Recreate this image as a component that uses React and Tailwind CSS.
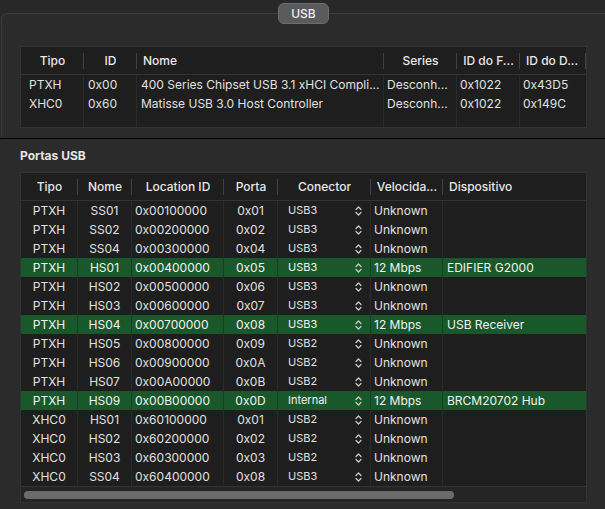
import React from "react";

const rows = [
  ["PTXH", "SS01", "0x00100000", "0x01", "USB3", "Unknown", "", false],
  ["PTXH", "SS02", "0x00200000", "0x02", "USB3", "Unknown", "", false],
  ["PTXH", "SS04", "0x00300000", "0x04", "USB3", "Unknown", "", false],
  ["PTXH", "HS01", "0x00400000", "0x05", "USB3", "12 Mbps", "EDIFIER G2000", true],
  ["PTXH", "HS02", "0x00500000", "0x06", "USB3", "Unknown", "", false],
  ["PTXH", "HS03", "0x00600000", "0x07", "USB3", "Unknown", "", false],
  ["PTXH", "HS04", "0x00700000", "0x08", "USB3", "12 Mbps", "USB Receiver", true],
  ["PTXH", "HS05", "0x00800000", "0x09", "USB2", "Unknown", "", false],
  ["PTXH", "HS06", "0x00900000", "0x0A", "USB2", "Unknown", "", false],
  ["PTXH", "HS07", "0x00A00000", "0x0B", "USB2", "Unknown", "", false],
  ["PTXH", "HS09", "0x00B00000", "0x0D", "Internal", "12 Mbps", "BRCM20702 Hub", true],
  ["XHC0", "HS01", "0x60100000", "0x01", "USB2", "Unknown", "", false],
  ["XHC0", "HS02", "0x60200000", "0x02", "USB2", "Unknown", "", false],
  ["XHC0", "HS03", "0x60300000", "0x03", "USB2", "Unknown", "", false],
  ["XHC0", "SS04", "0x60400000", "0x08", "USB3", "Unknown", "", false],
];

function Chevrons() {
  return (
    <svg width="7" height="10" viewBox="0 0 7 10" fill="none" stroke="#cfcfcf" strokeWidth="1.2" strokeLinecap="round" strokeLinejoin="round">
      <path d="M1 3.5 L3.5 1 L6 3.5" />
      <path d="M1 6.5 L3.5 9 L6 6.5" />
    </svg>
  );
}

function HeadCell({ w, children, align = "center", last }) {
  return (
    <div className={`relative flex h-full items-center shrink-0 ${align === "center" ? "justify-center" : "justify-start pl-[6px]"}`} style={{ width: w }}>
      <span className="truncate">{children}</span>
      {!last && <div className="absolute right-0 top-[6px] h-[16px] w-px bg-[#414141]" />}
    </div>
  );
}

function TopTable() {
  const cols = [63, 53, 247, 73, 63, 66];
  const data = [
    ["PTXH", "0x00", "400 Series Chipset USB 3.1 xHCI Compli...", "Desconh...", "0x1022", "0x43D5"],
    ["XHC0", "0x60", "Matisse USB 3.0 Host Controller", "Desconh...", "0x1022", "0x149C"],
  ];
  const pads = [8, 4, 4, 3, 3, 3];
  return (
    <div className="w-[567px] h-[82px] border border-[#333333] bg-[#1e1e1e] flex flex-col">
      <div className="h-[28px] flex border-b border-[#333333] text-[12px] font-medium text-[#e8e8e8]">
        <HeadCell w={63}>Tipo</HeadCell>
        <HeadCell w={53}>ID</HeadCell>
        <HeadCell w={247} align="left">Nome</HeadCell>
        <HeadCell w={73}>Series</HeadCell>
        <HeadCell w={63}>ID do F...</HeadCell>
        <HeadCell w={66} align="left">ID do D...</HeadCell>
      </div>
      <div className="relative flex-1 flex flex-col">
        <div className="absolute inset-0 flex pointer-events-none">
          {cols.map((w, i) => (
            <div key={i} className={`h-full shrink-0 ${i < 5 ? "border-r border-[#2a2a2a]" : ""}`} style={{ width: w }} />
          ))}
        </div>
        {data.map((r, ri) => (
          <div key={ri} className="relative flex h-[19px] items-center text-[12px] text-[#e0e0e0]">
            {r.map((c, ci) => (
              <div key={ci} className="shrink-0 truncate" style={{ width: cols[ci], paddingLeft: pads[ci] }}>{c}</div>
            ))}
          </div>
        ))}
      </div>
    </div>
  );
}

function BottomTable() {
  const cols = [57, 54, 92, 54, 93, 72, 143];
  return (
    <div className="w-[567px] h-[331px] border border-[#333333] bg-[#1e1e1e] flex flex-col">
      <div className="h-[28px] shrink-0 flex border-b border-[#333333] text-[12px] font-medium text-[#e8e8e8]">
        <HeadCell w={57}>Tipo</HeadCell>
        <HeadCell w={54}>Nome</HeadCell>
        <HeadCell w={92}>Location ID</HeadCell>
        <HeadCell w={54}>Porta</HeadCell>
        <HeadCell w={93}>Conector</HeadCell>
        <HeadCell w={72}>Velocida...</HeadCell>
        <HeadCell w={143} align="left" last>Dispositivo</HeadCell>
      </div>
      <div className="flex flex-col h-[285px] shrink-0">
        {rows.map((r, i) => {
          const g = r[7];
          const b = g ? "border-[#124320]" : "border-[#2a2a2a]";
          return (
            <div key={i} className={`flex h-[19px] items-center text-[12px] ${g ? "bg-[#19582b] text-[#f2f2f2]" : "text-[#e0e0e0]"}`}>
              <div className={`h-full flex items-center justify-center shrink-0 border-r ${b}`} style={{ width: cols[0] }}>{r[0]}</div>
              <div className={`h-full flex items-center justify-center shrink-0 border-r ${b}`} style={{ width: cols[1] }}>{r[1]}</div>
              <div className={`h-full flex items-center pl-[3px] shrink-0 border-r ${b}`} style={{ width: cols[2] }}>{r[2]}</div>
              <div className={`h-full flex items-center justify-center shrink-0 border-r ${b}`} style={{ width: cols[3] }}>{r[3]}</div>
              <div className={`h-full flex items-center justify-between pl-[10px] pr-[8px] shrink-0 border-r text-[11px] ${b}`} style={{ width: cols[4] }}>
                <span>{r[4]}</span>
                <Chevrons />
              </div>
              <div className={`h-full flex items-center pl-[3px] shrink-0 border-r ${b}`} style={{ width: cols[5] }}>{r[5]}</div>
              <div className="h-full flex items-center pl-[4px] shrink-0" style={{ width: cols[6] }}>{r[6]}</div>
            </div>
          );
        })}
      </div>
      <div className="flex-1 border-t border-[#333333] bg-[#242424] flex items-center pl-[3px]">
        <div className="h-[8px] w-[430px] rounded-full bg-[#6b6b6b]" />
      </div>
    </div>
  );
}

export default function App() {
  return (
    <div className="w-[605px] h-[509px] overflow-hidden bg-[#282828] flex flex-col" style={{ fontFamily: "Inter, 'Noto Sans', sans-serif" }}>
      <div className="relative h-[138px] shrink-0">
        <div className="absolute left-[278px] top-[3px] w-[51px] h-[21px] rounded-[6px] bg-[#5b5b5b] border border-[#6d6d6d] flex items-center justify-center text-[12px] font-medium text-[#ececec] z-10">
          USB
        </div>
        <div className="mt-[13px] ml-[1px] h-[125px] border-t border-l border-[#3d3d3d] rounded-tl-[6px] bg-[#2b2b2b] pl-[18px] pt-[32px]">
          <TopTable />
        </div>
      </div>
      <div className="h-px bg-black shrink-0" />
      <div className="flex-1 bg-[#2b2b2b] pl-[20px]">
        <div className="pt-[9px] h-[33px] text-[12px] font-bold text-[#e6e6e6] leading-[16px]">Portas USB</div>
        <BottomTable />
      </div>
    </div>
  );
}
